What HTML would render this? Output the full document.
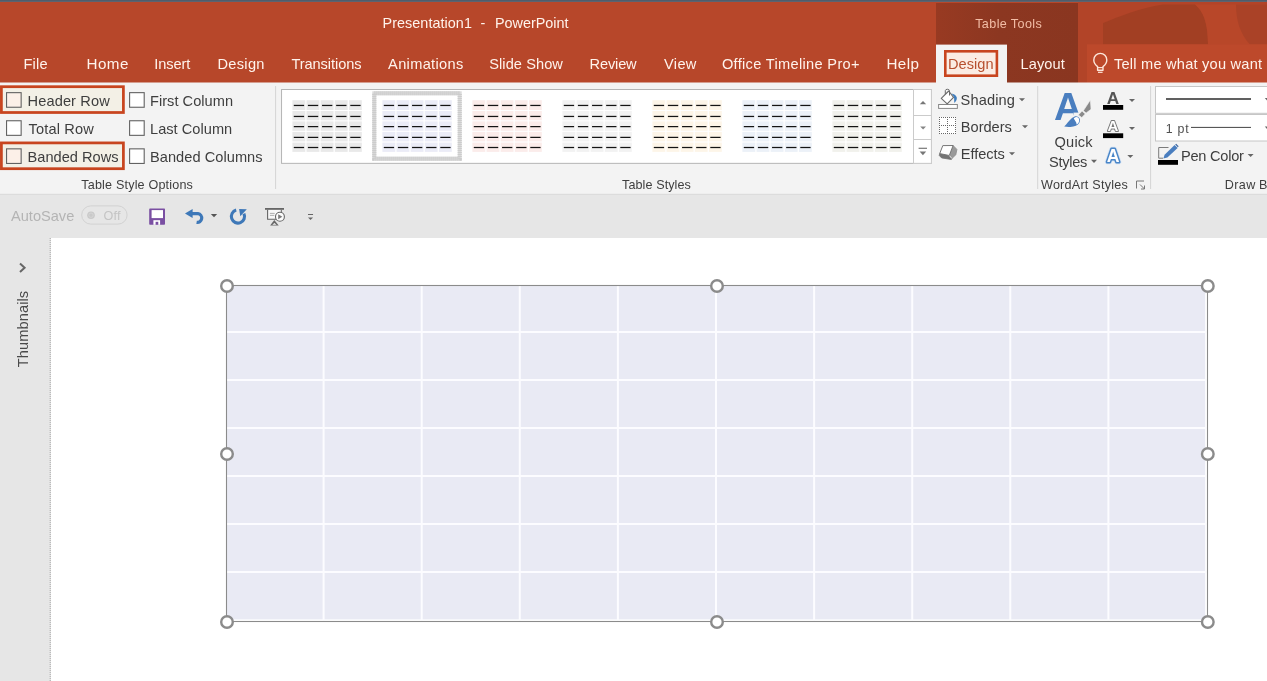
<!DOCTYPE html>
<html lang="en"><head><meta charset="utf-8"><title>PowerPoint Table Tools</title>
<style>
html,body{margin:0;padding:0;background:#fff;}
body{width:1267px;height:681px;overflow:hidden;position:relative;font-family:"Liberation Sans",sans-serif;}
#g{position:absolute;left:0;top:0;}
#tx{position:absolute;left:0;top:0;width:1267px;height:681px;will-change:transform;}
.t{position:absolute;white-space:pre;line-height:20px;height:20px;}
.ic{position:absolute;white-space:pre;line-height:1;font-weight:bold;}
</style></head><body>
<svg id="g" width="1267" height="681" viewBox="0 0 1267 681">
<rect x="0" y="0" width="1267" height="681" fill="#fff" />
<rect x="0" y="1.5" width="1267" height="81.5" fill="#b7472a" />
<rect x="1078" y="2" width="189" height="81" fill="#b24428" />
<path d="M1103 44.5V23C1118 17 1140 8 1163 4.5L1195 4.5C1203 11 1208 22 1208 44.5Z" fill="#a23f23" stroke="none" stroke-width="1" />
<path d="M1195 4.5L1267 4.5V44.5H1208C1208 22 1203 11 1195 4.5Z" fill="#b84729" stroke="none" stroke-width="1" />
<path d="M1236 4.5H1267V44.5H1250C1240 34 1236 20 1236 4.5Z" fill="#aa4227" stroke="none" stroke-width="1" />
<defs><linearGradient id="tt" x1="0" x2="1" y1="0" y2="0"><stop offset="0" stop-color="#983a22"/><stop offset="0.45" stop-color="#8c3721"/><stop offset="1" stop-color="#8a3620"/></linearGradient></defs>
<rect x="936" y="3" width="142" height="80" fill="url(#tt)" />
<rect x="1087" y="44.3" width="180" height="38.7" fill="#bd492b" />
<rect x="0" y="0" width="1267" height="1.9" fill="#4f5d6b" />
<rect x="0" y="82.5" width="1267" height="111.5" fill="#f3f3f3" />
<rect x="0" y="194" width="1267" height="44" fill="#e6e6e6" />
<line x1="0" y1="194.3" x2="1267" y2="194.3" stroke="#dadada" stroke-width="1" />
<rect x="936" y="44.6" width="71" height="38.4" fill="#f3f3f3" />
<rect x="945.3" y="51.3" width="51.6" height="24.4" fill="#fbece3" stroke="#c8451f" stroke-width="2.6"/>
<rect x="0" y="238" width="51" height="443" fill="#e6e6e6" />
<line x1="50.2" y1="238" x2="50.2" y2="681" stroke="#a9a9a9" stroke-width="1" stroke-dasharray="1 1"/>
<rect x="1.4" y="86.7" width="122" height="25.8" fill="#f3f0e6" stroke="#c8451f" stroke-width="2.75"/>
<rect x="1.4" y="142.9" width="122" height="25.8" fill="#f3f0e6" stroke="#c8451f" stroke-width="2.75"/>
<rect x="6.55" y="92.65" width="14.6" height="14.6" fill="#fcf0e8" stroke="#626262" stroke-width="1.1"/>
<rect x="6.55" y="120.75" width="14.6" height="14.6" fill="#fff" stroke="#626262" stroke-width="1.1"/>
<rect x="6.55" y="148.85" width="14.6" height="14.6" fill="#fcf0e8" stroke="#626262" stroke-width="1.1"/>
<rect x="129.6" y="92.65" width="14.6" height="14.6" fill="#fff" stroke="#626262" stroke-width="1.1"/>
<rect x="129.6" y="120.75" width="14.6" height="14.6" fill="#fff" stroke="#626262" stroke-width="1.1"/>
<rect x="129.6" y="148.85" width="14.6" height="14.6" fill="#fff" stroke="#626262" stroke-width="1.1"/>
<line x1="275.6" y1="86" x2="275.6" y2="189" stroke="#d4d4d4" stroke-width="1" />
<line x1="1037.7" y1="86" x2="1037.7" y2="189" stroke="#d4d4d4" stroke-width="1" />
<line x1="1150.6" y1="86" x2="1150.6" y2="189" stroke="#d4d4d4" stroke-width="1" />
<rect x="281.55" y="89.5" width="649.85" height="73.85" fill="#fff" stroke="#b4b4b4" stroke-width="1"/>
<rect x="913.5" y="89.5" width="17.9" height="73.85" fill="#fff" stroke="#cbcbcb" stroke-width="1"/>
<line x1="914" y1="115.5" x2="931" y2="115.5" stroke="#cbcbcb" stroke-width="1" />
<line x1="914" y1="139.5" x2="931" y2="139.5" stroke="#cbcbcb" stroke-width="1" />
<path d="M919.8 104.2L923 101.1L926.2 104.2Z" fill="#777" stroke="none" stroke-width="1" />
<path d="M920.2 126.4L926 126.4L923.1 129.6Z" fill="#858585" stroke="none" stroke-width="1" />
<line x1="918.6" y1="148.3" x2="927" y2="148.3" stroke="#777" stroke-width="1.2" />
<path d="M919.6 151.6L926.2 151.6L922.9 155.2Z" fill="#777" stroke="none" stroke-width="1" />
<rect x="292.4" y="100.2" width="12.9" height="9.8" fill="#e9e9e9" />
<line x1="293.8" y1="105.45" x2="304.1" y2="105.45" stroke="#141414" stroke-width="1.25" />
<rect x="306.52" y="100.2" width="12.9" height="9.8" fill="#e9e9e9" />
<line x1="307.92" y1="105.45" x2="318.22" y2="105.45" stroke="#141414" stroke-width="1.25" />
<rect x="320.64" y="100.2" width="12.9" height="9.8" fill="#e9e9e9" />
<line x1="322.04" y1="105.45" x2="332.34" y2="105.45" stroke="#141414" stroke-width="1.25" />
<rect x="334.76" y="100.2" width="12.9" height="9.8" fill="#e9e9e9" />
<line x1="336.16" y1="105.45" x2="346.46" y2="105.45" stroke="#141414" stroke-width="1.25" />
<rect x="348.88" y="100.2" width="12.9" height="9.8" fill="#e9e9e9" />
<line x1="350.28" y1="105.45" x2="360.58" y2="105.45" stroke="#141414" stroke-width="1.25" />
<rect x="292.4" y="111" width="12.9" height="9.3" fill="#e9e9e9" />
<line x1="293.8" y1="116.45" x2="304.1" y2="116.45" stroke="#141414" stroke-width="1.25" />
<rect x="306.52" y="111" width="12.9" height="9.3" fill="#e9e9e9" />
<line x1="307.92" y1="116.45" x2="318.22" y2="116.45" stroke="#141414" stroke-width="1.25" />
<rect x="320.64" y="111" width="12.9" height="9.3" fill="#e9e9e9" />
<line x1="322.04" y1="116.45" x2="332.34" y2="116.45" stroke="#141414" stroke-width="1.25" />
<rect x="334.76" y="111" width="12.9" height="9.3" fill="#e9e9e9" />
<line x1="336.16" y1="116.45" x2="346.46" y2="116.45" stroke="#141414" stroke-width="1.25" />
<rect x="348.88" y="111" width="12.9" height="9.3" fill="#e9e9e9" />
<line x1="350.28" y1="116.45" x2="360.58" y2="116.45" stroke="#141414" stroke-width="1.25" />
<rect x="292.4" y="121.4" width="12.9" height="9.4" fill="#e9e9e9" />
<line x1="293.8" y1="126.6" x2="304.1" y2="126.6" stroke="#141414" stroke-width="1.25" />
<rect x="306.52" y="121.4" width="12.9" height="9.4" fill="#e9e9e9" />
<line x1="307.92" y1="126.6" x2="318.22" y2="126.6" stroke="#141414" stroke-width="1.25" />
<rect x="320.64" y="121.4" width="12.9" height="9.4" fill="#e9e9e9" />
<line x1="322.04" y1="126.6" x2="332.34" y2="126.6" stroke="#141414" stroke-width="1.25" />
<rect x="334.76" y="121.4" width="12.9" height="9.4" fill="#e9e9e9" />
<line x1="336.16" y1="126.6" x2="346.46" y2="126.6" stroke="#141414" stroke-width="1.25" />
<rect x="348.88" y="121.4" width="12.9" height="9.4" fill="#e9e9e9" />
<line x1="350.28" y1="126.6" x2="360.58" y2="126.6" stroke="#141414" stroke-width="1.25" />
<rect x="292.4" y="131.9" width="12.9" height="9.5" fill="#e9e9e9" />
<line x1="293.8" y1="137.4" x2="304.1" y2="137.4" stroke="#141414" stroke-width="1.25" />
<rect x="306.52" y="131.9" width="12.9" height="9.5" fill="#e9e9e9" />
<line x1="307.92" y1="137.4" x2="318.22" y2="137.4" stroke="#141414" stroke-width="1.25" />
<rect x="320.64" y="131.9" width="12.9" height="9.5" fill="#e9e9e9" />
<line x1="322.04" y1="137.4" x2="332.34" y2="137.4" stroke="#141414" stroke-width="1.25" />
<rect x="334.76" y="131.9" width="12.9" height="9.5" fill="#e9e9e9" />
<line x1="336.16" y1="137.4" x2="346.46" y2="137.4" stroke="#141414" stroke-width="1.25" />
<rect x="348.88" y="131.9" width="12.9" height="9.5" fill="#e9e9e9" />
<line x1="350.28" y1="137.4" x2="360.58" y2="137.4" stroke="#141414" stroke-width="1.25" />
<rect x="292.4" y="142.6" width="12.9" height="9.3" fill="#e9e9e9" />
<line x1="293.8" y1="147.5" x2="304.1" y2="147.5" stroke="#141414" stroke-width="1.25" />
<rect x="306.52" y="142.6" width="12.9" height="9.3" fill="#e9e9e9" />
<line x1="307.92" y1="147.5" x2="318.22" y2="147.5" stroke="#141414" stroke-width="1.25" />
<rect x="320.64" y="142.6" width="12.9" height="9.3" fill="#e9e9e9" />
<line x1="322.04" y1="147.5" x2="332.34" y2="147.5" stroke="#141414" stroke-width="1.25" />
<rect x="334.76" y="142.6" width="12.9" height="9.3" fill="#e9e9e9" />
<line x1="336.16" y1="147.5" x2="346.46" y2="147.5" stroke="#141414" stroke-width="1.25" />
<rect x="348.88" y="142.6" width="12.9" height="9.3" fill="#e9e9e9" />
<line x1="350.28" y1="147.5" x2="360.58" y2="147.5" stroke="#141414" stroke-width="1.25" />
<rect x="382.4" y="100.2" width="12.9" height="9.8" fill="#ebecf7" />
<line x1="383.8" y1="105.45" x2="394.1" y2="105.45" stroke="#141414" stroke-width="1.25" />
<rect x="396.52" y="100.2" width="12.9" height="9.8" fill="#ebecf7" />
<line x1="397.92" y1="105.45" x2="408.22" y2="105.45" stroke="#141414" stroke-width="1.25" />
<rect x="410.64" y="100.2" width="12.9" height="9.8" fill="#ebecf7" />
<line x1="412.04" y1="105.45" x2="422.34" y2="105.45" stroke="#141414" stroke-width="1.25" />
<rect x="424.76" y="100.2" width="12.9" height="9.8" fill="#ebecf7" />
<line x1="426.16" y1="105.45" x2="436.46" y2="105.45" stroke="#141414" stroke-width="1.25" />
<rect x="438.88" y="100.2" width="12.9" height="9.8" fill="#ebecf7" />
<line x1="440.28" y1="105.45" x2="450.58" y2="105.45" stroke="#141414" stroke-width="1.25" />
<rect x="382.4" y="111" width="12.9" height="9.3" fill="#ebecf7" />
<line x1="383.8" y1="116.45" x2="394.1" y2="116.45" stroke="#141414" stroke-width="1.25" />
<rect x="396.52" y="111" width="12.9" height="9.3" fill="#ebecf7" />
<line x1="397.92" y1="116.45" x2="408.22" y2="116.45" stroke="#141414" stroke-width="1.25" />
<rect x="410.64" y="111" width="12.9" height="9.3" fill="#ebecf7" />
<line x1="412.04" y1="116.45" x2="422.34" y2="116.45" stroke="#141414" stroke-width="1.25" />
<rect x="424.76" y="111" width="12.9" height="9.3" fill="#ebecf7" />
<line x1="426.16" y1="116.45" x2="436.46" y2="116.45" stroke="#141414" stroke-width="1.25" />
<rect x="438.88" y="111" width="12.9" height="9.3" fill="#ebecf7" />
<line x1="440.28" y1="116.45" x2="450.58" y2="116.45" stroke="#141414" stroke-width="1.25" />
<rect x="382.4" y="121.4" width="12.9" height="9.4" fill="#ebecf7" />
<line x1="383.8" y1="126.6" x2="394.1" y2="126.6" stroke="#141414" stroke-width="1.25" />
<rect x="396.52" y="121.4" width="12.9" height="9.4" fill="#ebecf7" />
<line x1="397.92" y1="126.6" x2="408.22" y2="126.6" stroke="#141414" stroke-width="1.25" />
<rect x="410.64" y="121.4" width="12.9" height="9.4" fill="#ebecf7" />
<line x1="412.04" y1="126.6" x2="422.34" y2="126.6" stroke="#141414" stroke-width="1.25" />
<rect x="424.76" y="121.4" width="12.9" height="9.4" fill="#ebecf7" />
<line x1="426.16" y1="126.6" x2="436.46" y2="126.6" stroke="#141414" stroke-width="1.25" />
<rect x="438.88" y="121.4" width="12.9" height="9.4" fill="#ebecf7" />
<line x1="440.28" y1="126.6" x2="450.58" y2="126.6" stroke="#141414" stroke-width="1.25" />
<rect x="382.4" y="131.9" width="12.9" height="9.5" fill="#ebecf7" />
<line x1="383.8" y1="137.4" x2="394.1" y2="137.4" stroke="#141414" stroke-width="1.25" />
<rect x="396.52" y="131.9" width="12.9" height="9.5" fill="#ebecf7" />
<line x1="397.92" y1="137.4" x2="408.22" y2="137.4" stroke="#141414" stroke-width="1.25" />
<rect x="410.64" y="131.9" width="12.9" height="9.5" fill="#ebecf7" />
<line x1="412.04" y1="137.4" x2="422.34" y2="137.4" stroke="#141414" stroke-width="1.25" />
<rect x="424.76" y="131.9" width="12.9" height="9.5" fill="#ebecf7" />
<line x1="426.16" y1="137.4" x2="436.46" y2="137.4" stroke="#141414" stroke-width="1.25" />
<rect x="438.88" y="131.9" width="12.9" height="9.5" fill="#ebecf7" />
<line x1="440.28" y1="137.4" x2="450.58" y2="137.4" stroke="#141414" stroke-width="1.25" />
<rect x="382.4" y="142.6" width="12.9" height="9.3" fill="#ebecf7" />
<line x1="383.8" y1="147.5" x2="394.1" y2="147.5" stroke="#141414" stroke-width="1.25" />
<rect x="396.52" y="142.6" width="12.9" height="9.3" fill="#ebecf7" />
<line x1="397.92" y1="147.5" x2="408.22" y2="147.5" stroke="#141414" stroke-width="1.25" />
<rect x="410.64" y="142.6" width="12.9" height="9.3" fill="#ebecf7" />
<line x1="412.04" y1="147.5" x2="422.34" y2="147.5" stroke="#141414" stroke-width="1.25" />
<rect x="424.76" y="142.6" width="12.9" height="9.3" fill="#ebecf7" />
<line x1="426.16" y1="147.5" x2="436.46" y2="147.5" stroke="#141414" stroke-width="1.25" />
<rect x="438.88" y="142.6" width="12.9" height="9.3" fill="#ebecf7" />
<line x1="440.28" y1="147.5" x2="450.58" y2="147.5" stroke="#141414" stroke-width="1.25" />
<rect x="472.4" y="100.2" width="12.9" height="9.8" fill="#fbecea" />
<line x1="473.8" y1="105.45" x2="484.1" y2="105.45" stroke="#141414" stroke-width="1.25" />
<rect x="486.52" y="100.2" width="12.9" height="9.8" fill="#fbecea" />
<line x1="487.92" y1="105.45" x2="498.22" y2="105.45" stroke="#141414" stroke-width="1.25" />
<rect x="500.64" y="100.2" width="12.9" height="9.8" fill="#fbecea" />
<line x1="502.04" y1="105.45" x2="512.34" y2="105.45" stroke="#141414" stroke-width="1.25" />
<rect x="514.76" y="100.2" width="12.9" height="9.8" fill="#fbecea" />
<line x1="516.16" y1="105.45" x2="526.46" y2="105.45" stroke="#141414" stroke-width="1.25" />
<rect x="528.88" y="100.2" width="12.9" height="9.8" fill="#fbecea" />
<line x1="530.28" y1="105.45" x2="540.58" y2="105.45" stroke="#141414" stroke-width="1.25" />
<rect x="472.4" y="111" width="12.9" height="9.3" fill="#fbecea" />
<line x1="473.8" y1="116.45" x2="484.1" y2="116.45" stroke="#141414" stroke-width="1.25" />
<rect x="486.52" y="111" width="12.9" height="9.3" fill="#fbecea" />
<line x1="487.92" y1="116.45" x2="498.22" y2="116.45" stroke="#141414" stroke-width="1.25" />
<rect x="500.64" y="111" width="12.9" height="9.3" fill="#fbecea" />
<line x1="502.04" y1="116.45" x2="512.34" y2="116.45" stroke="#141414" stroke-width="1.25" />
<rect x="514.76" y="111" width="12.9" height="9.3" fill="#fbecea" />
<line x1="516.16" y1="116.45" x2="526.46" y2="116.45" stroke="#141414" stroke-width="1.25" />
<rect x="528.88" y="111" width="12.9" height="9.3" fill="#fbecea" />
<line x1="530.28" y1="116.45" x2="540.58" y2="116.45" stroke="#141414" stroke-width="1.25" />
<rect x="472.4" y="121.4" width="12.9" height="9.4" fill="#fbecea" />
<line x1="473.8" y1="126.6" x2="484.1" y2="126.6" stroke="#141414" stroke-width="1.25" />
<rect x="486.52" y="121.4" width="12.9" height="9.4" fill="#fbecea" />
<line x1="487.92" y1="126.6" x2="498.22" y2="126.6" stroke="#141414" stroke-width="1.25" />
<rect x="500.64" y="121.4" width="12.9" height="9.4" fill="#fbecea" />
<line x1="502.04" y1="126.6" x2="512.34" y2="126.6" stroke="#141414" stroke-width="1.25" />
<rect x="514.76" y="121.4" width="12.9" height="9.4" fill="#fbecea" />
<line x1="516.16" y1="126.6" x2="526.46" y2="126.6" stroke="#141414" stroke-width="1.25" />
<rect x="528.88" y="121.4" width="12.9" height="9.4" fill="#fbecea" />
<line x1="530.28" y1="126.6" x2="540.58" y2="126.6" stroke="#141414" stroke-width="1.25" />
<rect x="472.4" y="131.9" width="12.9" height="9.5" fill="#fbecea" />
<line x1="473.8" y1="137.4" x2="484.1" y2="137.4" stroke="#141414" stroke-width="1.25" />
<rect x="486.52" y="131.9" width="12.9" height="9.5" fill="#fbecea" />
<line x1="487.92" y1="137.4" x2="498.22" y2="137.4" stroke="#141414" stroke-width="1.25" />
<rect x="500.64" y="131.9" width="12.9" height="9.5" fill="#fbecea" />
<line x1="502.04" y1="137.4" x2="512.34" y2="137.4" stroke="#141414" stroke-width="1.25" />
<rect x="514.76" y="131.9" width="12.9" height="9.5" fill="#fbecea" />
<line x1="516.16" y1="137.4" x2="526.46" y2="137.4" stroke="#141414" stroke-width="1.25" />
<rect x="528.88" y="131.9" width="12.9" height="9.5" fill="#fbecea" />
<line x1="530.28" y1="137.4" x2="540.58" y2="137.4" stroke="#141414" stroke-width="1.25" />
<rect x="472.4" y="142.6" width="12.9" height="9.3" fill="#fbecea" />
<line x1="473.8" y1="147.5" x2="484.1" y2="147.5" stroke="#141414" stroke-width="1.25" />
<rect x="486.52" y="142.6" width="12.9" height="9.3" fill="#fbecea" />
<line x1="487.92" y1="147.5" x2="498.22" y2="147.5" stroke="#141414" stroke-width="1.25" />
<rect x="500.64" y="142.6" width="12.9" height="9.3" fill="#fbecea" />
<line x1="502.04" y1="147.5" x2="512.34" y2="147.5" stroke="#141414" stroke-width="1.25" />
<rect x="514.76" y="142.6" width="12.9" height="9.3" fill="#fbecea" />
<line x1="516.16" y1="147.5" x2="526.46" y2="147.5" stroke="#141414" stroke-width="1.25" />
<rect x="528.88" y="142.6" width="12.9" height="9.3" fill="#fbecea" />
<line x1="530.28" y1="147.5" x2="540.58" y2="147.5" stroke="#141414" stroke-width="1.25" />
<rect x="562.4" y="100.2" width="12.9" height="9.8" fill="#f2f2f2" />
<line x1="563.8" y1="105.45" x2="574.1" y2="105.45" stroke="#141414" stroke-width="1.25" />
<rect x="576.52" y="100.2" width="12.9" height="9.8" fill="#f2f2f2" />
<line x1="577.92" y1="105.45" x2="588.22" y2="105.45" stroke="#141414" stroke-width="1.25" />
<rect x="590.64" y="100.2" width="12.9" height="9.8" fill="#f2f2f2" />
<line x1="592.04" y1="105.45" x2="602.34" y2="105.45" stroke="#141414" stroke-width="1.25" />
<rect x="604.76" y="100.2" width="12.9" height="9.8" fill="#f2f2f2" />
<line x1="606.16" y1="105.45" x2="616.46" y2="105.45" stroke="#141414" stroke-width="1.25" />
<rect x="618.88" y="100.2" width="12.9" height="9.8" fill="#f2f2f2" />
<line x1="620.28" y1="105.45" x2="630.58" y2="105.45" stroke="#141414" stroke-width="1.25" />
<rect x="562.4" y="111" width="12.9" height="9.3" fill="#f2f2f2" />
<line x1="563.8" y1="116.45" x2="574.1" y2="116.45" stroke="#141414" stroke-width="1.25" />
<rect x="576.52" y="111" width="12.9" height="9.3" fill="#f2f2f2" />
<line x1="577.92" y1="116.45" x2="588.22" y2="116.45" stroke="#141414" stroke-width="1.25" />
<rect x="590.64" y="111" width="12.9" height="9.3" fill="#f2f2f2" />
<line x1="592.04" y1="116.45" x2="602.34" y2="116.45" stroke="#141414" stroke-width="1.25" />
<rect x="604.76" y="111" width="12.9" height="9.3" fill="#f2f2f2" />
<line x1="606.16" y1="116.45" x2="616.46" y2="116.45" stroke="#141414" stroke-width="1.25" />
<rect x="618.88" y="111" width="12.9" height="9.3" fill="#f2f2f2" />
<line x1="620.28" y1="116.45" x2="630.58" y2="116.45" stroke="#141414" stroke-width="1.25" />
<rect x="562.4" y="121.4" width="12.9" height="9.4" fill="#f2f2f2" />
<line x1="563.8" y1="126.6" x2="574.1" y2="126.6" stroke="#141414" stroke-width="1.25" />
<rect x="576.52" y="121.4" width="12.9" height="9.4" fill="#f2f2f2" />
<line x1="577.92" y1="126.6" x2="588.22" y2="126.6" stroke="#141414" stroke-width="1.25" />
<rect x="590.64" y="121.4" width="12.9" height="9.4" fill="#f2f2f2" />
<line x1="592.04" y1="126.6" x2="602.34" y2="126.6" stroke="#141414" stroke-width="1.25" />
<rect x="604.76" y="121.4" width="12.9" height="9.4" fill="#f2f2f2" />
<line x1="606.16" y1="126.6" x2="616.46" y2="126.6" stroke="#141414" stroke-width="1.25" />
<rect x="618.88" y="121.4" width="12.9" height="9.4" fill="#f2f2f2" />
<line x1="620.28" y1="126.6" x2="630.58" y2="126.6" stroke="#141414" stroke-width="1.25" />
<rect x="562.4" y="131.9" width="12.9" height="9.5" fill="#f2f2f2" />
<line x1="563.8" y1="137.4" x2="574.1" y2="137.4" stroke="#141414" stroke-width="1.25" />
<rect x="576.52" y="131.9" width="12.9" height="9.5" fill="#f2f2f2" />
<line x1="577.92" y1="137.4" x2="588.22" y2="137.4" stroke="#141414" stroke-width="1.25" />
<rect x="590.64" y="131.9" width="12.9" height="9.5" fill="#f2f2f2" />
<line x1="592.04" y1="137.4" x2="602.34" y2="137.4" stroke="#141414" stroke-width="1.25" />
<rect x="604.76" y="131.9" width="12.9" height="9.5" fill="#f2f2f2" />
<line x1="606.16" y1="137.4" x2="616.46" y2="137.4" stroke="#141414" stroke-width="1.25" />
<rect x="618.88" y="131.9" width="12.9" height="9.5" fill="#f2f2f2" />
<line x1="620.28" y1="137.4" x2="630.58" y2="137.4" stroke="#141414" stroke-width="1.25" />
<rect x="562.4" y="142.6" width="12.9" height="9.3" fill="#f2f2f2" />
<line x1="563.8" y1="147.5" x2="574.1" y2="147.5" stroke="#141414" stroke-width="1.25" />
<rect x="576.52" y="142.6" width="12.9" height="9.3" fill="#f2f2f2" />
<line x1="577.92" y1="147.5" x2="588.22" y2="147.5" stroke="#141414" stroke-width="1.25" />
<rect x="590.64" y="142.6" width="12.9" height="9.3" fill="#f2f2f2" />
<line x1="592.04" y1="147.5" x2="602.34" y2="147.5" stroke="#141414" stroke-width="1.25" />
<rect x="604.76" y="142.6" width="12.9" height="9.3" fill="#f2f2f2" />
<line x1="606.16" y1="147.5" x2="616.46" y2="147.5" stroke="#141414" stroke-width="1.25" />
<rect x="618.88" y="142.6" width="12.9" height="9.3" fill="#f2f2f2" />
<line x1="620.28" y1="147.5" x2="630.58" y2="147.5" stroke="#141414" stroke-width="1.25" />
<rect x="652.4" y="100.2" width="12.9" height="9.8" fill="#fdf5e8" />
<line x1="653.8" y1="105.45" x2="664.1" y2="105.45" stroke="#141414" stroke-width="1.25" />
<rect x="666.52" y="100.2" width="12.9" height="9.8" fill="#fdf5e8" />
<line x1="667.92" y1="105.45" x2="678.22" y2="105.45" stroke="#141414" stroke-width="1.25" />
<rect x="680.64" y="100.2" width="12.9" height="9.8" fill="#fdf5e8" />
<line x1="682.04" y1="105.45" x2="692.34" y2="105.45" stroke="#141414" stroke-width="1.25" />
<rect x="694.76" y="100.2" width="12.9" height="9.8" fill="#fdf5e8" />
<line x1="696.16" y1="105.45" x2="706.46" y2="105.45" stroke="#141414" stroke-width="1.25" />
<rect x="708.88" y="100.2" width="12.9" height="9.8" fill="#fdf5e8" />
<line x1="710.28" y1="105.45" x2="720.58" y2="105.45" stroke="#141414" stroke-width="1.25" />
<rect x="652.4" y="111" width="12.9" height="9.3" fill="#fdf5e8" />
<line x1="653.8" y1="116.45" x2="664.1" y2="116.45" stroke="#141414" stroke-width="1.25" />
<rect x="666.52" y="111" width="12.9" height="9.3" fill="#fdf5e8" />
<line x1="667.92" y1="116.45" x2="678.22" y2="116.45" stroke="#141414" stroke-width="1.25" />
<rect x="680.64" y="111" width="12.9" height="9.3" fill="#fdf5e8" />
<line x1="682.04" y1="116.45" x2="692.34" y2="116.45" stroke="#141414" stroke-width="1.25" />
<rect x="694.76" y="111" width="12.9" height="9.3" fill="#fdf5e8" />
<line x1="696.16" y1="116.45" x2="706.46" y2="116.45" stroke="#141414" stroke-width="1.25" />
<rect x="708.88" y="111" width="12.9" height="9.3" fill="#fdf5e8" />
<line x1="710.28" y1="116.45" x2="720.58" y2="116.45" stroke="#141414" stroke-width="1.25" />
<rect x="652.4" y="121.4" width="12.9" height="9.4" fill="#fdf5e8" />
<line x1="653.8" y1="126.6" x2="664.1" y2="126.6" stroke="#141414" stroke-width="1.25" />
<rect x="666.52" y="121.4" width="12.9" height="9.4" fill="#fdf5e8" />
<line x1="667.92" y1="126.6" x2="678.22" y2="126.6" stroke="#141414" stroke-width="1.25" />
<rect x="680.64" y="121.4" width="12.9" height="9.4" fill="#fdf5e8" />
<line x1="682.04" y1="126.6" x2="692.34" y2="126.6" stroke="#141414" stroke-width="1.25" />
<rect x="694.76" y="121.4" width="12.9" height="9.4" fill="#fdf5e8" />
<line x1="696.16" y1="126.6" x2="706.46" y2="126.6" stroke="#141414" stroke-width="1.25" />
<rect x="708.88" y="121.4" width="12.9" height="9.4" fill="#fdf5e8" />
<line x1="710.28" y1="126.6" x2="720.58" y2="126.6" stroke="#141414" stroke-width="1.25" />
<rect x="652.4" y="131.9" width="12.9" height="9.5" fill="#fdf5e8" />
<line x1="653.8" y1="137.4" x2="664.1" y2="137.4" stroke="#141414" stroke-width="1.25" />
<rect x="666.52" y="131.9" width="12.9" height="9.5" fill="#fdf5e8" />
<line x1="667.92" y1="137.4" x2="678.22" y2="137.4" stroke="#141414" stroke-width="1.25" />
<rect x="680.64" y="131.9" width="12.9" height="9.5" fill="#fdf5e8" />
<line x1="682.04" y1="137.4" x2="692.34" y2="137.4" stroke="#141414" stroke-width="1.25" />
<rect x="694.76" y="131.9" width="12.9" height="9.5" fill="#fdf5e8" />
<line x1="696.16" y1="137.4" x2="706.46" y2="137.4" stroke="#141414" stroke-width="1.25" />
<rect x="708.88" y="131.9" width="12.9" height="9.5" fill="#fdf5e8" />
<line x1="710.28" y1="137.4" x2="720.58" y2="137.4" stroke="#141414" stroke-width="1.25" />
<rect x="652.4" y="142.6" width="12.9" height="9.3" fill="#fdf5e8" />
<line x1="653.8" y1="147.5" x2="664.1" y2="147.5" stroke="#141414" stroke-width="1.25" />
<rect x="666.52" y="142.6" width="12.9" height="9.3" fill="#fdf5e8" />
<line x1="667.92" y1="147.5" x2="678.22" y2="147.5" stroke="#141414" stroke-width="1.25" />
<rect x="680.64" y="142.6" width="12.9" height="9.3" fill="#fdf5e8" />
<line x1="682.04" y1="147.5" x2="692.34" y2="147.5" stroke="#141414" stroke-width="1.25" />
<rect x="694.76" y="142.6" width="12.9" height="9.3" fill="#fdf5e8" />
<line x1="696.16" y1="147.5" x2="706.46" y2="147.5" stroke="#141414" stroke-width="1.25" />
<rect x="708.88" y="142.6" width="12.9" height="9.3" fill="#fdf5e8" />
<line x1="710.28" y1="147.5" x2="720.58" y2="147.5" stroke="#141414" stroke-width="1.25" />
<rect x="742.4" y="100.2" width="12.9" height="9.8" fill="#ecf1f8" />
<line x1="743.8" y1="105.45" x2="754.1" y2="105.45" stroke="#141414" stroke-width="1.25" />
<rect x="756.52" y="100.2" width="12.9" height="9.8" fill="#ecf1f8" />
<line x1="757.92" y1="105.45" x2="768.22" y2="105.45" stroke="#141414" stroke-width="1.25" />
<rect x="770.64" y="100.2" width="12.9" height="9.8" fill="#ecf1f8" />
<line x1="772.04" y1="105.45" x2="782.34" y2="105.45" stroke="#141414" stroke-width="1.25" />
<rect x="784.76" y="100.2" width="12.9" height="9.8" fill="#ecf1f8" />
<line x1="786.16" y1="105.45" x2="796.46" y2="105.45" stroke="#141414" stroke-width="1.25" />
<rect x="798.88" y="100.2" width="12.9" height="9.8" fill="#ecf1f8" />
<line x1="800.28" y1="105.45" x2="810.58" y2="105.45" stroke="#141414" stroke-width="1.25" />
<rect x="742.4" y="111" width="12.9" height="9.3" fill="#ecf1f8" />
<line x1="743.8" y1="116.45" x2="754.1" y2="116.45" stroke="#141414" stroke-width="1.25" />
<rect x="756.52" y="111" width="12.9" height="9.3" fill="#ecf1f8" />
<line x1="757.92" y1="116.45" x2="768.22" y2="116.45" stroke="#141414" stroke-width="1.25" />
<rect x="770.64" y="111" width="12.9" height="9.3" fill="#ecf1f8" />
<line x1="772.04" y1="116.45" x2="782.34" y2="116.45" stroke="#141414" stroke-width="1.25" />
<rect x="784.76" y="111" width="12.9" height="9.3" fill="#ecf1f8" />
<line x1="786.16" y1="116.45" x2="796.46" y2="116.45" stroke="#141414" stroke-width="1.25" />
<rect x="798.88" y="111" width="12.9" height="9.3" fill="#ecf1f8" />
<line x1="800.28" y1="116.45" x2="810.58" y2="116.45" stroke="#141414" stroke-width="1.25" />
<rect x="742.4" y="121.4" width="12.9" height="9.4" fill="#ecf1f8" />
<line x1="743.8" y1="126.6" x2="754.1" y2="126.6" stroke="#141414" stroke-width="1.25" />
<rect x="756.52" y="121.4" width="12.9" height="9.4" fill="#ecf1f8" />
<line x1="757.92" y1="126.6" x2="768.22" y2="126.6" stroke="#141414" stroke-width="1.25" />
<rect x="770.64" y="121.4" width="12.9" height="9.4" fill="#ecf1f8" />
<line x1="772.04" y1="126.6" x2="782.34" y2="126.6" stroke="#141414" stroke-width="1.25" />
<rect x="784.76" y="121.4" width="12.9" height="9.4" fill="#ecf1f8" />
<line x1="786.16" y1="126.6" x2="796.46" y2="126.6" stroke="#141414" stroke-width="1.25" />
<rect x="798.88" y="121.4" width="12.9" height="9.4" fill="#ecf1f8" />
<line x1="800.28" y1="126.6" x2="810.58" y2="126.6" stroke="#141414" stroke-width="1.25" />
<rect x="742.4" y="131.9" width="12.9" height="9.5" fill="#ecf1f8" />
<line x1="743.8" y1="137.4" x2="754.1" y2="137.4" stroke="#141414" stroke-width="1.25" />
<rect x="756.52" y="131.9" width="12.9" height="9.5" fill="#ecf1f8" />
<line x1="757.92" y1="137.4" x2="768.22" y2="137.4" stroke="#141414" stroke-width="1.25" />
<rect x="770.64" y="131.9" width="12.9" height="9.5" fill="#ecf1f8" />
<line x1="772.04" y1="137.4" x2="782.34" y2="137.4" stroke="#141414" stroke-width="1.25" />
<rect x="784.76" y="131.9" width="12.9" height="9.5" fill="#ecf1f8" />
<line x1="786.16" y1="137.4" x2="796.46" y2="137.4" stroke="#141414" stroke-width="1.25" />
<rect x="798.88" y="131.9" width="12.9" height="9.5" fill="#ecf1f8" />
<line x1="800.28" y1="137.4" x2="810.58" y2="137.4" stroke="#141414" stroke-width="1.25" />
<rect x="742.4" y="142.6" width="12.9" height="9.3" fill="#ecf1f8" />
<line x1="743.8" y1="147.5" x2="754.1" y2="147.5" stroke="#141414" stroke-width="1.25" />
<rect x="756.52" y="142.6" width="12.9" height="9.3" fill="#ecf1f8" />
<line x1="757.92" y1="147.5" x2="768.22" y2="147.5" stroke="#141414" stroke-width="1.25" />
<rect x="770.64" y="142.6" width="12.9" height="9.3" fill="#ecf1f8" />
<line x1="772.04" y1="147.5" x2="782.34" y2="147.5" stroke="#141414" stroke-width="1.25" />
<rect x="784.76" y="142.6" width="12.9" height="9.3" fill="#ecf1f8" />
<line x1="786.16" y1="147.5" x2="796.46" y2="147.5" stroke="#141414" stroke-width="1.25" />
<rect x="798.88" y="142.6" width="12.9" height="9.3" fill="#ecf1f8" />
<line x1="800.28" y1="147.5" x2="810.58" y2="147.5" stroke="#141414" stroke-width="1.25" />
<rect x="832.4" y="100.2" width="12.9" height="9.8" fill="#f1f1ec" />
<line x1="833.8" y1="105.45" x2="844.1" y2="105.45" stroke="#141414" stroke-width="1.25" />
<rect x="846.52" y="100.2" width="12.9" height="9.8" fill="#f1f1ec" />
<line x1="847.92" y1="105.45" x2="858.22" y2="105.45" stroke="#141414" stroke-width="1.25" />
<rect x="860.64" y="100.2" width="12.9" height="9.8" fill="#f1f1ec" />
<line x1="862.04" y1="105.45" x2="872.34" y2="105.45" stroke="#141414" stroke-width="1.25" />
<rect x="874.76" y="100.2" width="12.9" height="9.8" fill="#f1f1ec" />
<line x1="876.16" y1="105.45" x2="886.46" y2="105.45" stroke="#141414" stroke-width="1.25" />
<rect x="888.88" y="100.2" width="12.9" height="9.8" fill="#f1f1ec" />
<line x1="890.28" y1="105.45" x2="900.58" y2="105.45" stroke="#141414" stroke-width="1.25" />
<rect x="832.4" y="111" width="12.9" height="9.3" fill="#f1f1ec" />
<line x1="833.8" y1="116.45" x2="844.1" y2="116.45" stroke="#141414" stroke-width="1.25" />
<rect x="846.52" y="111" width="12.9" height="9.3" fill="#f1f1ec" />
<line x1="847.92" y1="116.45" x2="858.22" y2="116.45" stroke="#141414" stroke-width="1.25" />
<rect x="860.64" y="111" width="12.9" height="9.3" fill="#f1f1ec" />
<line x1="862.04" y1="116.45" x2="872.34" y2="116.45" stroke="#141414" stroke-width="1.25" />
<rect x="874.76" y="111" width="12.9" height="9.3" fill="#f1f1ec" />
<line x1="876.16" y1="116.45" x2="886.46" y2="116.45" stroke="#141414" stroke-width="1.25" />
<rect x="888.88" y="111" width="12.9" height="9.3" fill="#f1f1ec" />
<line x1="890.28" y1="116.45" x2="900.58" y2="116.45" stroke="#141414" stroke-width="1.25" />
<rect x="832.4" y="121.4" width="12.9" height="9.4" fill="#f1f1ec" />
<line x1="833.8" y1="126.6" x2="844.1" y2="126.6" stroke="#141414" stroke-width="1.25" />
<rect x="846.52" y="121.4" width="12.9" height="9.4" fill="#f1f1ec" />
<line x1="847.92" y1="126.6" x2="858.22" y2="126.6" stroke="#141414" stroke-width="1.25" />
<rect x="860.64" y="121.4" width="12.9" height="9.4" fill="#f1f1ec" />
<line x1="862.04" y1="126.6" x2="872.34" y2="126.6" stroke="#141414" stroke-width="1.25" />
<rect x="874.76" y="121.4" width="12.9" height="9.4" fill="#f1f1ec" />
<line x1="876.16" y1="126.6" x2="886.46" y2="126.6" stroke="#141414" stroke-width="1.25" />
<rect x="888.88" y="121.4" width="12.9" height="9.4" fill="#f1f1ec" />
<line x1="890.28" y1="126.6" x2="900.58" y2="126.6" stroke="#141414" stroke-width="1.25" />
<rect x="832.4" y="131.9" width="12.9" height="9.5" fill="#f1f1ec" />
<line x1="833.8" y1="137.4" x2="844.1" y2="137.4" stroke="#141414" stroke-width="1.25" />
<rect x="846.52" y="131.9" width="12.9" height="9.5" fill="#f1f1ec" />
<line x1="847.92" y1="137.4" x2="858.22" y2="137.4" stroke="#141414" stroke-width="1.25" />
<rect x="860.64" y="131.9" width="12.9" height="9.5" fill="#f1f1ec" />
<line x1="862.04" y1="137.4" x2="872.34" y2="137.4" stroke="#141414" stroke-width="1.25" />
<rect x="874.76" y="131.9" width="12.9" height="9.5" fill="#f1f1ec" />
<line x1="876.16" y1="137.4" x2="886.46" y2="137.4" stroke="#141414" stroke-width="1.25" />
<rect x="888.88" y="131.9" width="12.9" height="9.5" fill="#f1f1ec" />
<line x1="890.28" y1="137.4" x2="900.58" y2="137.4" stroke="#141414" stroke-width="1.25" />
<rect x="832.4" y="142.6" width="12.9" height="9.3" fill="#f1f1ec" />
<line x1="833.8" y1="147.5" x2="844.1" y2="147.5" stroke="#141414" stroke-width="1.25" />
<rect x="846.52" y="142.6" width="12.9" height="9.3" fill="#f1f1ec" />
<line x1="847.92" y1="147.5" x2="858.22" y2="147.5" stroke="#141414" stroke-width="1.25" />
<rect x="860.64" y="142.6" width="12.9" height="9.3" fill="#f1f1ec" />
<line x1="862.04" y1="147.5" x2="872.34" y2="147.5" stroke="#141414" stroke-width="1.25" />
<rect x="874.76" y="142.6" width="12.9" height="9.3" fill="#f1f1ec" />
<line x1="876.16" y1="147.5" x2="886.46" y2="147.5" stroke="#141414" stroke-width="1.25" />
<rect x="888.88" y="142.6" width="12.9" height="9.3" fill="#f1f1ec" />
<line x1="890.28" y1="147.5" x2="900.58" y2="147.5" stroke="#141414" stroke-width="1.25" />
<rect x="374.3" y="93.3" width="85.4" height="65.4" fill="none" stroke="#c3c3c3" stroke-width="4" stroke-dasharray="1.2 0.8"/>
<rect x="374.3" y="93.3" width="85.4" height="65.4" fill="none" stroke="#cfcfcf" stroke-width="4" opacity="0.75"/>
<rect x="938.6" y="104.5" width="18.75" height="3.9" fill="#fff" stroke="#878787" stroke-width="1"/>
<path d="M941.25 98.3L948.7 91L953.5 97.45L947.2 103.9Z" fill="#fff" stroke="#6a6a6a" stroke-width="1.1" stroke-linejoin="round"/>
<path d="M945.3 94.2V90.6C945.3 88.8 949.5 88.8 949.5 90.6V95.5" fill="none" stroke="#6a6a6a" stroke-width="1" />
<path d="M951.4 93.4C953.8 93.6 956.2 95.2 956.8 97.4C957.2 99.4 955.8 101.4 954.4 102.9C954 101 954.4 98.6 953.9 97C953.4 95.6 952.4 94.4 951.4 93.4Z" fill="#3f7dbd" stroke="none" stroke-width="1" />
<rect x="939" y="117" width="17" height="17" fill="#fff" />
<rect x="939" y="117" width="1" height="1" fill="#686868" />
<rect x="939" y="125" width="1" height="1" fill="#686868" />
<rect x="939" y="133" width="1" height="1" fill="#686868" />
<rect x="939" y="117" width="1" height="1" fill="#686868" />
<rect x="947" y="117" width="1" height="1" fill="#686868" />
<rect x="955" y="117" width="1" height="1" fill="#686868" />
<rect x="941" y="117" width="1" height="1" fill="#686868" />
<rect x="941" y="125" width="1" height="1" fill="#686868" />
<rect x="941" y="133" width="1" height="1" fill="#686868" />
<rect x="939" y="119" width="1" height="1" fill="#686868" />
<rect x="947" y="119" width="1" height="1" fill="#686868" />
<rect x="955" y="119" width="1" height="1" fill="#686868" />
<rect x="943" y="117" width="1" height="1" fill="#686868" />
<rect x="943" y="125" width="1" height="1" fill="#686868" />
<rect x="943" y="133" width="1" height="1" fill="#686868" />
<rect x="939" y="121" width="1" height="1" fill="#686868" />
<rect x="947" y="121" width="1" height="1" fill="#686868" />
<rect x="955" y="121" width="1" height="1" fill="#686868" />
<rect x="945" y="117" width="1" height="1" fill="#686868" />
<rect x="945" y="125" width="1" height="1" fill="#686868" />
<rect x="945" y="133" width="1" height="1" fill="#686868" />
<rect x="939" y="123" width="1" height="1" fill="#686868" />
<rect x="947" y="123" width="1" height="1" fill="#686868" />
<rect x="955" y="123" width="1" height="1" fill="#686868" />
<rect x="947" y="117" width="1" height="1" fill="#686868" />
<rect x="947" y="125" width="1" height="1" fill="#686868" />
<rect x="947" y="133" width="1" height="1" fill="#686868" />
<rect x="939" y="125" width="1" height="1" fill="#686868" />
<rect x="947" y="125" width="1" height="1" fill="#686868" />
<rect x="955" y="125" width="1" height="1" fill="#686868" />
<rect x="949" y="117" width="1" height="1" fill="#686868" />
<rect x="949" y="125" width="1" height="1" fill="#686868" />
<rect x="949" y="133" width="1" height="1" fill="#686868" />
<rect x="939" y="127" width="1" height="1" fill="#686868" />
<rect x="947" y="127" width="1" height="1" fill="#686868" />
<rect x="955" y="127" width="1" height="1" fill="#686868" />
<rect x="951" y="117" width="1" height="1" fill="#686868" />
<rect x="951" y="125" width="1" height="1" fill="#686868" />
<rect x="951" y="133" width="1" height="1" fill="#686868" />
<rect x="939" y="129" width="1" height="1" fill="#686868" />
<rect x="947" y="129" width="1" height="1" fill="#686868" />
<rect x="955" y="129" width="1" height="1" fill="#686868" />
<rect x="953" y="117" width="1" height="1" fill="#686868" />
<rect x="953" y="125" width="1" height="1" fill="#686868" />
<rect x="953" y="133" width="1" height="1" fill="#686868" />
<rect x="939" y="131" width="1" height="1" fill="#686868" />
<rect x="947" y="131" width="1" height="1" fill="#686868" />
<rect x="955" y="131" width="1" height="1" fill="#686868" />
<rect x="955" y="117" width="1" height="1" fill="#686868" />
<rect x="955" y="125" width="1" height="1" fill="#686868" />
<rect x="955" y="133" width="1" height="1" fill="#686868" />
<rect x="939" y="133" width="1" height="1" fill="#686868" />
<rect x="947" y="133" width="1" height="1" fill="#686868" />
<rect x="955" y="133" width="1" height="1" fill="#686868" />
<path d="M939.7 153.6L949.3 155.5L951.9 158.6L951.4 159.5L941.6 157.9L939.2 155.4Z" fill="#757575" stroke="#757575" stroke-width="0.8" stroke-linejoin="round"/>
<path d="M953.1 145.5L956.9 149.4L955.8 154.7L951.9 158.6L949.3 155.5Z" fill="#9a9a9a" stroke="#8a8a8a" stroke-width="0.8" stroke-linejoin="round"/>
<path d="M942.8 145.6L953.1 145.5L949.3 155.5L939.7 153.6Z" fill="#fff" stroke="#777" stroke-width="1" stroke-linejoin="round"/>
<line x1="949.5" y1="155.7" x2="951.8" y2="158.4" stroke="#f4f4f4" stroke-width="0.9" />
<path d="M1019 98.3H1025L1022 101.3Z" fill="#666" stroke="none" stroke-width="1" />
<path d="M1022 125.2H1028L1025 128.2Z" fill="#666" stroke="none" stroke-width="1" />
<path d="M1009 152.2H1015L1012 155.2Z" fill="#666" stroke="none" stroke-width="1" />
<path d="M1091 159.8H1097L1094 163Z" fill="#666" stroke="none" stroke-width="1" />
<rect x="1103" y="105" width="20.2" height="4.8" fill="#000" />
<rect x="1103" y="133.3" width="20.2" height="4.8" fill="#000" />
<path d="M1129 99H1135L1132 102Z" fill="#666" stroke="none" stroke-width="1" />
<path d="M1129 126.9H1135L1132 129.9Z" fill="#666" stroke="none" stroke-width="1" />
<path d="M1127.3 155H1133.3L1130.3 158Z" fill="#666" stroke="none" stroke-width="1" />
<path d="M1136.5 188.5V181H1144" fill="none" stroke="#777" stroke-width="1" />
<path d="M1140 184.5L1144.5 189M1144.5 185.5V189H1141" fill="none" stroke="#777" stroke-width="1" />
<rect x="1155.5" y="86.5" width="130" height="26.8" fill="#fff" stroke="#c6c6c6" stroke-width="1"/>
<rect x="1155.5" y="114.5" width="130" height="26.5" fill="#fff" stroke="#c6c6c6" stroke-width="1"/>
<line x1="1166" y1="99" x2="1251" y2="99" stroke="#2b2b2b" stroke-width="1.7" />
<line x1="1191" y1="127.4" x2="1251" y2="127.4" stroke="#444" stroke-width="1" />
<path d="M1264.8 98L1270 98L1267.4 101Z" fill="#666" stroke="none" stroke-width="1" />
<path d="M1264.8 126.5L1270 126.5L1267.4 129.5Z" fill="#666" stroke="none" stroke-width="1" />
<path d="M1168.5 147.5H1158.7V158.2H1163" fill="none" stroke="#7b7b7b" stroke-width="1" />
<path d="M1163.4 158.6L1164.6 154.8L1174.6 145L1177.6 148L1167.4 157.6Z" fill="#4a7ebf" stroke="none" stroke-width="1" />
<path d="M1175.2 144.6L1176.2 143.8L1178.6 146.2L1177.9 147.2Z" fill="#3a65a0" stroke="none" stroke-width="1" />
<rect x="1158" y="160" width="20" height="4.8" fill="#000" />
<path d="M1247.6 154H1253.6L1250.6 157Z" fill="#666" stroke="none" stroke-width="1" />
<rect x="81.7" y="205.9" width="45.4" height="18.2" fill="none" stroke="#d2d2d2" stroke-width="1" rx="9.1"/>
<circle cx="91" cy="215.2" r="3.8" fill="#c9c9c9"/>
<circle cx="91" cy="215.2" r="2.2" fill="none" stroke="#d8d8d8" stroke-width="0.8"/>
<path d="M149.2 209.6C149.2 209 149.7 208.6 150.2 208.6H164C164.6 208.6 165 209 165 209.6V223.8C165 224.4 164.6 224.8 164 224.8H150.2C149.7 224.8 149.2 224.4 149.2 223.8Z" fill="#7a4fa2" stroke="none" stroke-width="1" />
<rect x="151.6" y="210.1" width="11.4" height="8" fill="#fff" />
<rect x="153.4" y="220.2" width="6.7" height="4.6" fill="#fff" />
<rect x="155.6" y="221.8" width="2.7" height="3" fill="#7a4fa2" />
<path d="M185 213.5L192.6 208.9V218.1Z" fill="#3e78b8" stroke="none" stroke-width="1" />
<path d="M192 213.7H198A4.3 4.3 0 0 1 196.6 222.4" fill="none" stroke="#3e78b8" stroke-width="3.2" />
<path d="M210.8 214H217.2L214 217.2Z" fill="#555" stroke="none" stroke-width="1" />
<path d="M236.2 210.1A6.6 6.6 0 1 0 243.9 213.6" fill="none" stroke="#3e78b8" stroke-width="3.1" />
<path d="M239.1 209.1L246.8 209.3L240.3 216.3Z" fill="#3e78b8" stroke="none" stroke-width="1" />
<rect x="268" y="210" width="13" height="9" fill="#f7f7f7" />
<rect x="265" y="208" width="19" height="1.8" fill="#666" />
<path d="M267.6 209.8V219.3H276" fill="none" stroke="#666" stroke-width="1.1" />
<line x1="281.3" y1="209.8" x2="281.3" y2="212.5" stroke="#666" stroke-width="1" />
<line x1="269.9" y1="213.4" x2="274.7" y2="213.4" stroke="#a6a6a6" stroke-width="0.9" />
<line x1="269.9" y1="215.4" x2="274.3" y2="215.4" stroke="#a6a6a6" stroke-width="0.9" />
<path d="M274.3 219.9L270.1 225.6H278.7Z" fill="#666" stroke="none" stroke-width="1" />
<path d="M274.4 222.9L272.3 224.7H276.5Z" fill="#f4f4f4" stroke="none" stroke-width="1" />
<circle cx="279.95" cy="216.75" r="4.45" fill="#fbfbfb" stroke="#666" stroke-width="1.1"/>
<path d="M278.2 214.3V219.2L282.3 216.75Z" fill="#777" stroke="none" stroke-width="1" />
<rect x="308" y="214" width="5.05" height="1" fill="#666" />
<path d="M308 217.4H313.05L310.525 219.9Z" fill="#666" stroke="none" stroke-width="1" />
<path d="M20 263.6L24.6 267.8L20 272" fill="none" stroke="#666" stroke-width="2" />
<rect x="227" y="286" width="978.2" height="333.4" fill="#e9eaf4" />
<line x1="323.6" y1="286" x2="323.6" y2="620.5" stroke="#fcfcff" stroke-width="2" />
<line x1="421.7" y1="286" x2="421.7" y2="620.5" stroke="#fcfcff" stroke-width="2" />
<line x1="519.8" y1="286" x2="519.8" y2="620.5" stroke="#fcfcff" stroke-width="2" />
<line x1="617.9" y1="286" x2="617.9" y2="620.5" stroke="#fcfcff" stroke-width="2" />
<line x1="716" y1="286" x2="716" y2="620.5" stroke="#fcfcff" stroke-width="2" />
<line x1="814.1" y1="286" x2="814.1" y2="620.5" stroke="#fcfcff" stroke-width="2" />
<line x1="912.2" y1="286" x2="912.2" y2="620.5" stroke="#fcfcff" stroke-width="2" />
<line x1="1010.3" y1="286" x2="1010.3" y2="620.5" stroke="#fcfcff" stroke-width="2" />
<line x1="1108.4" y1="286" x2="1108.4" y2="620.5" stroke="#fcfcff" stroke-width="2" />
<line x1="227" y1="332.1" x2="1206.5" y2="332.1" stroke="#fcfcff" stroke-width="2" />
<line x1="227" y1="380.1" x2="1206.5" y2="380.1" stroke="#fcfcff" stroke-width="2" />
<line x1="227" y1="428.1" x2="1206.5" y2="428.1" stroke="#fcfcff" stroke-width="2" />
<line x1="227" y1="476.1" x2="1206.5" y2="476.1" stroke="#fcfcff" stroke-width="2" />
<line x1="227" y1="524.1" x2="1206.5" y2="524.1" stroke="#fcfcff" stroke-width="2" />
<line x1="227" y1="572.1" x2="1206.5" y2="572.1" stroke="#fcfcff" stroke-width="2" />
<rect x="226.5" y="285.5" width="981" height="336" fill="none" stroke="#8b8b8b" stroke-width="1.1"/>
<circle cx="227" cy="286" r="5.8" fill="#fff" stroke="#8b8b8b" stroke-width="2.4"/>
<circle cx="717" cy="286" r="5.8" fill="#fff" stroke="#8b8b8b" stroke-width="2.4"/>
<circle cx="1207.8" cy="286" r="5.8" fill="#fff" stroke="#8b8b8b" stroke-width="2.4"/>
<circle cx="227" cy="454" r="5.8" fill="#fff" stroke="#8b8b8b" stroke-width="2.4"/>
<circle cx="1207.8" cy="454" r="5.8" fill="#fff" stroke="#8b8b8b" stroke-width="2.4"/>
<circle cx="227" cy="622" r="5.8" fill="#fff" stroke="#8b8b8b" stroke-width="2.4"/>
<circle cx="717" cy="622" r="5.8" fill="#fff" stroke="#8b8b8b" stroke-width="2.4"/>
<circle cx="1207.8" cy="622" r="5.8" fill="#fff" stroke="#8b8b8b" stroke-width="2.4"/>
<path d="M1097.6 70.3V66.6C1095.4 64.9 1093.8 62.6 1093.8 59.9A6.5 6.5 0 0 1 1106.8 59.9C1106.8 62.6 1105.2 64.9 1103 66.6V70.3Z" fill="none" stroke="#fde6da" stroke-width="1.4" stroke-linejoin="round"/>
<line x1="1097.6" y1="67.6" x2="1103" y2="67.6" stroke="#fde6da" stroke-width="1.1" />
<line x1="1098" y1="72.3" x2="1102.6" y2="72.3" stroke="#fde6da" stroke-width="1.2" />
</svg>
<div id="tx">
<span class="t" style="left:382.50px;top:12.91px;font-size:14.4px;letter-spacing:0.050px;color:#fff3ec;">Presentation1</span>
<span class="t" style="left:480.50px;top:12.91px;font-size:14.4px;letter-spacing:0.000px;color:#fff3ec;">-</span>
<span class="t" style="left:494.90px;top:12.91px;font-size:14.4px;letter-spacing:0.011px;color:#fff3ec;">PowerPoint</span>
<span class="t" style="left:975.20px;top:13.63px;font-size:12.6px;letter-spacing:0.380px;color:#f2bda6;">Table Tools</span>
<span class="t" style="left:23.50px;top:54.04px;font-size:14.6px;letter-spacing:0.167px;color:#fff3ec;">File</span>
<span class="t" style="left:86.40px;top:53.83px;font-size:15.2px;letter-spacing:0.533px;color:#fff3ec;">Home</span>
<span class="t" style="left:154.30px;top:54.04px;font-size:14.6px;letter-spacing:-0.120px;color:#fff3ec;">Insert</span>
<span class="t" style="left:217.50px;top:54.04px;font-size:14.6px;letter-spacing:0.300px;color:#fff3ec;">Design</span>
<span class="t" style="left:291.40px;top:54.04px;font-size:14.6px;letter-spacing:-0.060px;color:#fff3ec;">Transitions</span>
<span class="t" style="left:388.10px;top:54.04px;font-size:14.6px;letter-spacing:0.333px;color:#fff3ec;">Animations</span>
<span class="t" style="left:489.20px;top:54.04px;font-size:14.6px;letter-spacing:0.078px;color:#fff3ec;">Slide Show</span>
<span class="t" style="left:589.50px;top:54.04px;font-size:14.6px;letter-spacing:-0.140px;color:#fff3ec;">Review</span>
<span class="t" style="left:664.10px;top:54.04px;font-size:14.6px;letter-spacing:0.300px;color:#fff3ec;">View</span>
<span class="t" style="left:721.90px;top:54.04px;font-size:14.6px;letter-spacing:0.321px;color:#fff3ec;">Office Timeline Pro+</span>
<span class="t" style="left:886.50px;top:53.83px;font-size:15.2px;letter-spacing:0.400px;color:#fff3ec;">Help</span>
<span class="t" style="left:947.90px;top:54.04px;font-size:14.6px;letter-spacing:0.040px;color:#b7502f;">Design</span>
<span class="t" style="left:1020.60px;top:54.04px;font-size:14.6px;letter-spacing:0.060px;color:#fff3ec;">Layout</span>
<span class="t" style="left:1114.00px;top:54.04px;font-size:14.6px;letter-spacing:0.225px;color:#fff3ec;">Tell me what you want</span>
<span class="t" style="left:27.50px;top:91.04px;font-size:14.6px;letter-spacing:0.122px;color:#3e3e3e;">Header Row</span>
<span class="t" style="left:28.50px;top:119.04px;font-size:14.6px;letter-spacing:0.150px;color:#3e3e3e;">Total Row</span>
<span class="t" style="left:27.50px;top:147.04px;font-size:14.6px;letter-spacing:0.020px;color:#3e3e3e;">Banded Rows</span>
<span class="t" style="left:150.00px;top:91.04px;font-size:14.6px;letter-spacing:0.027px;color:#3e3e3e;">First Column</span>
<span class="t" style="left:150.00px;top:119.04px;font-size:14.6px;letter-spacing:0.030px;color:#3e3e3e;">Last Column</span>
<span class="t" style="left:150.00px;top:147.04px;font-size:14.6px;letter-spacing:0.046px;color:#3e3e3e;">Banded Columns</span>
<span class="t" style="left:81.30px;top:174.73px;font-size:12.6px;letter-spacing:0.172px;color:#3e3e3e;">Table Style Options</span>
<span class="t" style="left:622.00px;top:174.73px;font-size:12.6px;letter-spacing:0.091px;color:#3e3e3e;">Table Styles</span>
<span class="t" style="left:960.60px;top:89.74px;font-size:14.6px;letter-spacing:0.133px;color:#3e3e3e;">Shading</span>
<span class="t" style="left:960.80px;top:116.94px;font-size:14.6px;letter-spacing:0.000px;color:#3e3e3e;">Borders</span>
<span class="t" style="left:960.80px;top:143.84px;font-size:14.6px;letter-spacing:-0.050px;color:#3e3e3e;">Effects</span>
<span class="t" style="left:1054.60px;top:132.04px;font-size:14.6px;letter-spacing:0.175px;color:#3e3e3e;">Quick</span>
<span class="t" style="left:1049.00px;top:152.04px;font-size:14.6px;letter-spacing:-0.280px;color:#3e3e3e;">Styles</span>
<span class="t" style="left:1041.00px;top:174.73px;font-size:12.6px;letter-spacing:0.231px;color:#3e3e3e;">WordArt Styles</span>
<span class="t" style="left:1165.85px;top:118.70px;font-size:12.4px;letter-spacing:0.717px;color:#505050;">1 pt</span>
<span class="t" style="left:1181.00px;top:146.04px;font-size:14.6px;letter-spacing:-0.250px;color:#3e3e3e;">Pen Color</span>
<span class="t" style="left:1224.70px;top:174.63px;font-size:12.6px;letter-spacing:0.400px;color:#3e3e3e;">Draw</span>
<span class="t" style="left:1259.10px;top:174.63px;font-size:12.6px;letter-spacing:0.000px;color:#3e3e3e;">B</span>
<span class="t" style="left:11.00px;top:206.04px;font-size:14.6px;letter-spacing:0.000px;color:#b4b4b4;">AutoSave</span>
<span class="t" style="left:103.50px;top:206.23px;font-size:12.6px;letter-spacing:0.250px;color:#c4c4c4;">Off</span>
<svg id="g2" width="1267" height="681" viewBox="0 0 1267 681" style="position:absolute;left:0;top:0" font-family="Liberation Sans, sans-serif" font-weight="bold" text-anchor="middle">
<text x="1068" y="119.9" font-size="38.8" fill="#4a7ebf">A</text>
<path d="M1073.5 112.6L1083.5 112.6L1083.5 121.5L1073.5 121.5Z" fill="#f3f3f3"/>
<path d="M1090.4 100L1091 109.3L1086.1 113L1083.3 110.8Z" fill="#8a8a8a" stroke="#f3f3f3" stroke-width="0.6"/>
<path d="M1082.1 111.1L1085.2 113.9L1081.8 117.6L1078.4 114.9Z" fill="#8a8a8a" stroke="#f3f3f3" stroke-width="0.6"/>
<path d="M1064.2 126.6C1067 123.5 1069 120.5 1071 118.9C1072.4 117.6 1073.6 116.8 1074.7 116.4C1075.8 116 1077 116.2 1077.8 116.7C1079 117.4 1079.8 118.4 1079.9 119.5C1080 120.8 1079.7 122.2 1079 123.2C1078.2 124.3 1077.2 125.2 1075.9 125.7C1074.2 126.4 1072.4 126.8 1070.4 126.9C1068.4 127 1066.2 126.9 1064.2 126.6Z" fill="#4a7ebf"/>
<path d="M1073.8 118.2C1074.8 117.4 1075.8 117 1076.5 117C1077.8 117 1078.8 117.8 1079 118.9C1079.3 120.3 1079.2 121.6 1078.7 122.6C1078.2 123.5 1077.4 124.1 1076.5 124.4C1076.6 123.5 1076.4 122.7 1075.9 122C1075.5 121.3 1075.1 120.7 1074.7 120.1C1074.3 119.5 1074 118.9 1073.8 118.2Z" fill="#fff"/>
<text x="1112.9" y="103.7" font-size="17.3" fill="#555">A</text>
<text x="1112.9" y="131.4" font-size="15" fill="#fff" stroke="#777" stroke-width="2" stroke-linejoin="round" paint-order="stroke">A</text>
<text x="1113.05" y="162.2" font-size="17.7" fill="#fff" stroke="#cfe0f3" stroke-width="4.6" stroke-linejoin="round" paint-order="stroke" opacity="0.8">A</text>
<text x="1113.05" y="162.2" font-size="17.7" fill="#fff" stroke="#4a86c8" stroke-width="3" stroke-linejoin="round" paint-order="stroke">A</text>
</svg>
<span class="t" style="left:-17px;top:318.5px;width:80px;text-align:center;font-size:14.6px;letter-spacing:0.1px;color:#4a4a4a;transform:rotate(-90deg);transform-origin:50% 50%;">Thumbnails</span>
</div>
</body></html>
